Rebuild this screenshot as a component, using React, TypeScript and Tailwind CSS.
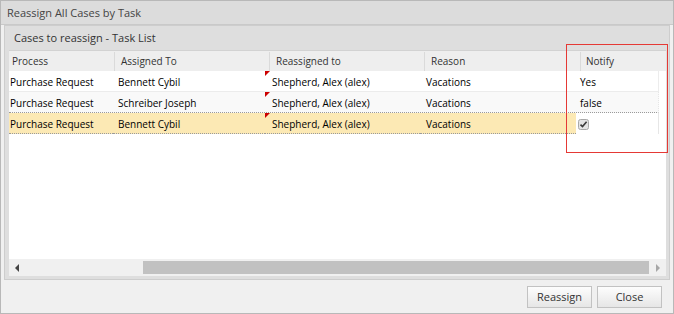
import React from 'react'

const rows = [
  { process: 'Purchase Request', assigned: 'Bennett Cybil', reassigned: 'Shepherd, Alex (alex)', reason: 'Vacations', notify: 'Yes' },
  { process: 'Purchase Request', assigned: 'Schreiber Joseph', reassigned: 'Shepherd, Alex (alex)', reason: 'Vacations', notify: 'false' },
  { process: 'Purchase Request', assigned: 'Bennett Cybil', reassigned: 'Shepherd, Alex (alex)', reason: 'Vacations', notify: null },
]

function DirtyMark() {
  return (
    <span className="absolute left-0 top-0 w-0 h-0 border-t-[5px] border-r-[5px] border-t-[#cc0000] border-r-transparent" />
  )
}

function CheckBox() {
  return (
    <svg width="11" height="11" viewBox="0 0 11 11">
      <rect x="0.5" y="0.5" width="10" height="10" rx="2" fill="#e4e4e4" stroke="#a9a9a9" />
      <path d="M2.5 5.6 L4.5 7.6 L8.6 2.8" fill="none" stroke="#3a3a3a" strokeWidth="1.6" />
    </svg>
  )
}

export default function App() {
  return (
    <div className="relative w-[674px] h-[314px] border border-[#b8b8b8] bg-[#f0f0f0] flex flex-col font-['Open_Sans',sans-serif] text-[10px] text-black overflow-hidden">
      {/* window title */}
      <div className="h-[24px] shrink-0 bg-[#dcdcdc] border-b border-[#c9c9c9] pl-[6px] pt-[1px] flex items-center text-[11px] text-[#444]">
        Reassign All Cases by Task
      </div>

      {/* panel */}
      <div className="h-[255px] shrink-0 ml-[3px] mr-[3px] border border-[#cdcdcd] bg-[#dedede] pl-[4px] pr-[3px] pb-[3px] flex flex-col">
        <div className="h-[24px] shrink-0 pl-[5px] pt-[1px] flex items-center text-[11px] text-[#333]">
          Cases to reassign - Task List
        </div>

        <div className="flex-1 bg-white flex flex-col border-t border-[#d2d2d2]">
          {/* column headers */}
          <div className="h-[20px] shrink-0 bg-[#eeeeee] flex text-[#333] pt-[1px]">
            <div className="w-[105px] pl-[3px] flex items-center">Process</div>
            <div className="w-[155px] pl-[6px] flex items-center border-l border-[#dadada]">Assigned To</div>
            <div className="w-[155px] pl-[6px] flex items-center border-l border-[#dadada]">Reassigned to</div>
            <div className="w-[156px] pl-[6px] flex items-center border-l border-[#dadada]">Reason</div>
            <div className="flex-1 pl-[5px] flex items-center border-l border-[#dadada]">Notify</div>
          </div>

          {/* rows */}
          <div className="flex-1">
            {rows.map((r, i) => {
              const selected = r.notify === null
              const cell = selected ? 'bg-[#fce9b4] border-b border-dotted border-[#9a9a9a]' : ''
              return (
                <div
                  key={i}
                  className={`w-[650px] h-[21px] flex border-r border-[#e6e6e6] ${
                    selected ? '' : i === 1 ? 'bg-[#f9f9f9] border-b border-dotted border-b-[#9a9a9a]' : 'border-b border-[#ececec]'
                  }`}
                >
                  <div className={`w-[104px] pl-[1px] pt-[2px] flex items-center ${cell}`}>{r.process}</div>
                  <div className={`w-[152px] pl-[5px] pt-[2px] flex items-center ${cell}`}>{r.assigned}</div>
                  <div className={`relative w-[155px] pl-[7px] pt-[2px] flex items-center ${cell}`}>
                    <DirtyMark />
                    {r.reassigned}
                  </div>
                  <div className={`w-[156px] pl-[6px] pt-[2px] flex items-center ${cell}`}>{r.reason}</div>
                  {r.notify ? (
                    <div className="flex-1 pl-[4px] pt-[2px] flex items-center">{r.notify}</div>
                  ) : (
                    <div className="flex-1 pl-[2px] pt-[6px] flex items-start">
                      <CheckBox />
                    </div>
                  )}
                </div>
              )
            })}
          </div>

          {/* horizontal scrollbar */}
          <div className="h-[17px] shrink-0 bg-[#f0f0f0] flex items-center">
            <div className="w-[134px] h-full pl-[6px] flex items-center">
              <span className="w-0 h-0 border-y-[4px] border-y-transparent border-r-[4px] border-r-[#444]" />
            </div>
            <div className="w-[506px] h-[13px] bg-[#c1c1c1]" />
            <div className="flex-1 h-full pl-[7px] flex items-center">
              <span className="w-0 h-0 border-y-[4px] border-y-transparent border-l-[4px] border-l-[#a6a6a6]" />
            </div>
          </div>
        </div>
      </div>

      {/* footer */}
      <div className="flex-1 flex justify-end gap-[5px] pt-[6px] pr-[11px]">
        <button className="w-[65px] h-[22px] border border-[#c2c2c2] bg-gradient-to-b from-[#fdfdfd] to-[#e6e6e6] text-[11px] text-[#333]">
          Reassign
        </button>
        <button className="w-[65px] h-[22px] border border-[#c2c2c2] bg-gradient-to-b from-[#fdfdfd] to-[#e6e6e6] text-[11px] text-[#333]">
          Close
        </button>
      </div>

      {/* red highlight annotation */}
      <div className="absolute left-[565px] top-[43px] w-[102px] h-[109px] border border-[#e53935] pointer-events-none" />
    </div>
  )
}
